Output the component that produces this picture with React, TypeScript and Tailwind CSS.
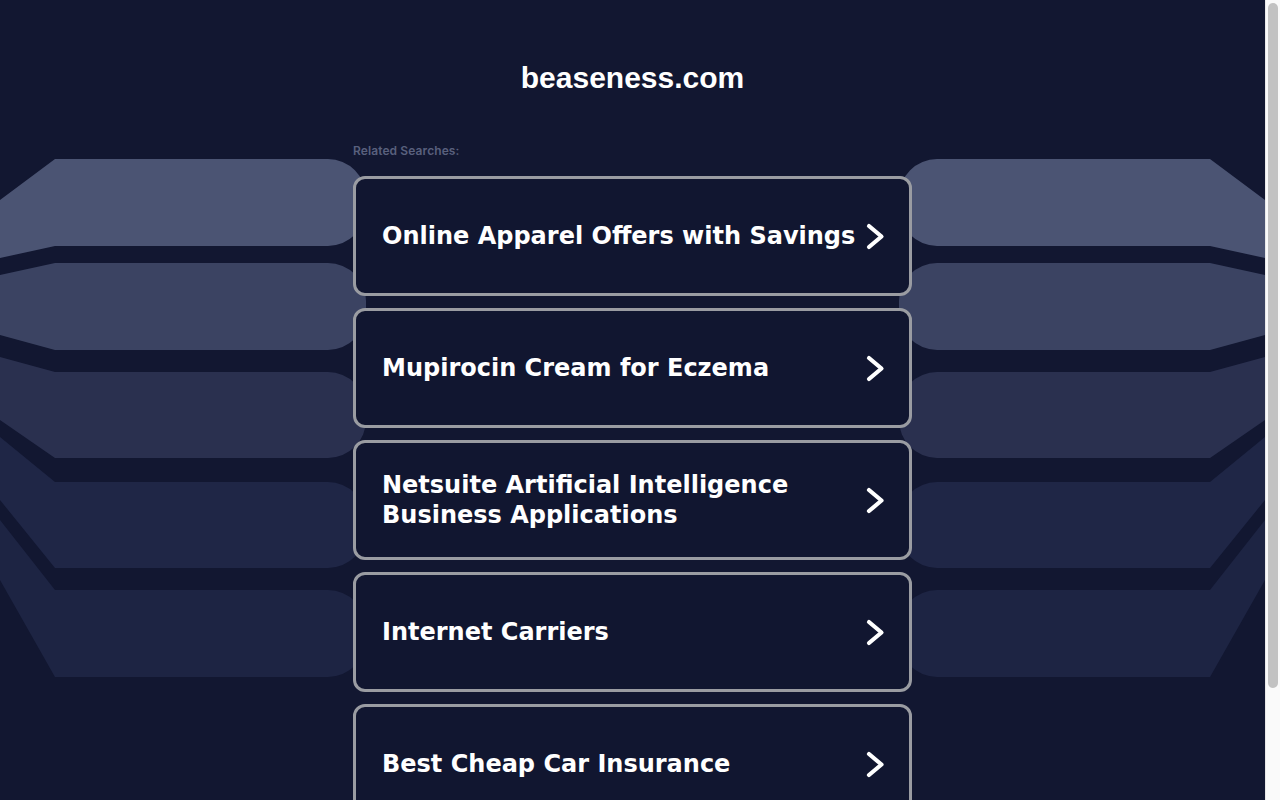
import React from 'react'

const searches = [
  'Online Apparel Offers with Savings',
  'Mupirocin Cream for Eczema',
  'Netsuite Artificial Intelligence Business Applications',
  'Internet Carriers',
  'Best Cheap Car Insurance',
]

// stacked background slabs: top/bottom at the flat part, and where the slanted ends meet the edge
const slabs = [
  { t: 159, b: 246, lt: 200, lb: 258, fill: '#4b5473' },
  { t: 263, b: 350, lt: 275, lb: 335, fill: '#3b4362' },
  { t: 372, b: 458, lt: 357, lb: 420, fill: '#2a304f' },
  { t: 482, b: 568, lt: 437, lb: 500, fill: '#1f2646' },
  { t: 590, b: 677, lt: 520, lb: 580, fill: '#1d2443' },
]

function slabPath(s: (typeof slabs)[number]) {
  const R = 366
  const r = 38
  return `M55 ${s.t} H${R - r} A${r} ${r} 0 0 1 ${R} ${s.t + r} V${s.b - r} A${r} ${r} 0 0 1 ${R - r} ${s.b} H55 L0 ${s.lb} V${s.lt} Z`
}

function Backdrop() {
  return (
    <svg className="absolute inset-0 h-full w-full" viewBox="0 0 1265 800" preserveAspectRatio="xMidYMin slice">
      <g>
        {slabs.map((s, i) => (
          <path key={i} d={slabPath(s)} fill={s.fill} />
        ))}
      </g>
      <g transform="translate(1265 0) scale(-1 1)">
        {slabs.map((s, i) => (
          <path key={i} d={slabPath(s)} fill={s.fill} />
        ))}
      </g>
    </svg>
  )
}

function Chevron() {
  return (
    <svg width="19" height="27" viewBox="0 0 19 27" className="shrink-0">
      <polyline points="3,3 15.5,13.5 3,24" fill="none" stroke="#fff" strokeWidth="4.2" strokeLinecap="round" strokeLinejoin="round" />
    </svg>
  )
}

export default function App() {
  return (
    <div className="flex h-[800px] w-full overflow-hidden bg-[#121731]">
      <main className="relative flex-1 overflow-hidden">
        <Backdrop />
        <div className="relative flex flex-col items-center pt-[60px]">
          <h1 className="text-[30px] leading-[36px] font-bold text-white [font-family:'Liberation_Sans',Arial,sans-serif]">
            beaseness.com
          </h1>

          <div className="mt-[47px] w-[559px]">
            <p className="text-[12px] leading-[16px] font-semibold tracking-[0.1px] text-[#59607d] [font-family:Inter,'Noto_Sans',sans-serif]">
              Related Searches:
            </p>
            <div className="mt-[17px] flex flex-col gap-3">
              {searches.map(s => (
                <a
                  key={s}
                  href="#"
                  className="flex h-[120px] items-center justify-between gap-2 rounded-[12px] border-[3px] border-[#9a9ca2] bg-[#111630] pl-[26px] pr-[24px]"
                >
                  <span className="min-w-0 text-[24px] leading-[30px] font-bold text-white [font-family:'DejaVu_Sans',Verdana,sans-serif]">
                    {s}
                  </span>
                  <Chevron />
                </a>
              ))}
            </div>
          </div>
        </div>
      </main>

      {/* fake scrollbar */}
      <div className="flex w-[15px] shrink-0 flex-col border-l border-[#e8e8e8] bg-[#fafafa] px-[2px] pt-[3px]">
        <div className="h-[685px] w-full rounded-full bg-[#c2c2c2]" />
      </div>
    </div>
  )
}
